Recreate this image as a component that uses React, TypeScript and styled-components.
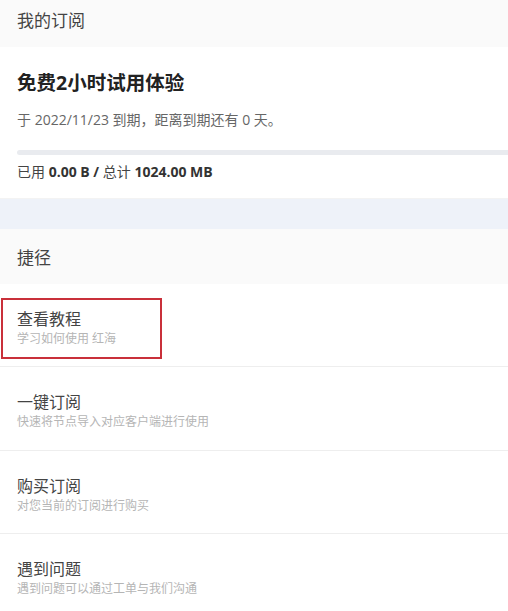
import React from 'react'
import styled, { createGlobalStyle } from 'styled-components'

const GlobalStyle = createGlobalStyle`
  html, body { margin: 0; padding: 0; background: #fff; }
  body {
    font-family: "Open Sans", "Noto Sans CJK SC", sans-serif;
    color: #333;
    overflow: hidden;
  }
  * { box-sizing: border-box; }
`

interface Shortcut {
  title: string
  desc: string
  marked?: boolean
}

const shortcuts: Shortcut[] = [
  { title: '查看教程', desc: '学习如何使用 红海', marked: true },
  { title: '一键订阅', desc: '快速将节点导入对应客户端进行使用' },
  { title: '购买订阅', desc: '对您当前的订阅进行购买' },
  { title: '遇到问题', desc: '遇到问题可以通过工单与我们沟通' },
]

export default function App() {
  return (
    <Page>
      <GlobalStyle />
      <Card>
        <CardHeader>我的订阅</CardHeader>
        <SubBody>
          <PlanTitle>免费2小时试用体验</PlanTitle>
          <Expiry>于 2022/11/23 到期，距离到期还有 0 天。</Expiry>
          <Progress>
            <ProgressFill style={{ width: '0%' }} />
          </Progress>
          <Usage>
            已用 <b>0.00 B</b> <b>/</b> 总计 <b>1024.00 MB</b>
          </Usage>
        </SubBody>
      </Card>
      <Gap />
      <Card>
        <CardHeader>捷径</CardHeader>
        <List>
          {shortcuts.map(s => (
            <Item key={s.title}>
              <ItemTitle>{s.title}</ItemTitle>
              <ItemDesc>{s.desc}</ItemDesc>
              {s.marked && <Marker />}
            </Item>
          ))}
        </List>
      </Card>
    </Page>
  )
}

// the screenshot is scrolled 8px down, so the first header is cut
const Page = styled.div`
  margin-top: -8px;
  width: 100%;
`

const Card = styled.section`
  background: #fff;
`

const CardHeader = styled.div`
  height: 55px;
  display: flex;
  align-items: center;
  padding: 0 17px;
  background: #fafafa;
  font-size: 17px;
  color: #444;
`

const SubBody = styled.div`
  padding: 21px 0 16px 17px;
  border-bottom: 1px solid #f3f3f3;
`

const PlanTitle = styled.div`
  font-size: 19.5px;
  font-weight: 700;
  color: #222;
  line-height: 30px;
`

const Expiry = styled.div`
  margin-top: 12px;
  font-size: 14px;
  color: #666;
  line-height: 20px;
`

const Progress = styled.div`
  margin-top: 20px;
  margin-right: -10px;
  height: 5px;
  background: #e9ebef;
  border-radius: 3px;
  overflow: hidden;
`

const ProgressFill = styled.div`
  height: 100%;
  background: #1e88e5;
`

const Usage = styled.div`
  margin-top: 7px;
  font-size: 14px;
  line-height: 20px;
  color: #444;
  b { color: #333; font-weight: 700; }
`

const Gap = styled.div`
  height: 30px;
  background: #eef2f9;
`

const List = styled.div`
  display: flex;
  flex-direction: column;
`

const Item = styled.div`
  position: relative;
  height: 83.4px;
  padding: 24px 17px 0;
  border-bottom: 1px solid #eeeeee;
`

const ItemTitle = styled.div`
  font-size: 16px;
  line-height: 22px;
  color: #444;
`

const ItemDesc = styled.div`
  font-size: 12px;
  line-height: 18px;
  color: #b5b5b5;
`

const Marker = styled.div`
  position: absolute;
  left: 1px;
  top: 14px;
  width: 161px;
  height: 61px;
  border: 2px solid #c9303a;
`
